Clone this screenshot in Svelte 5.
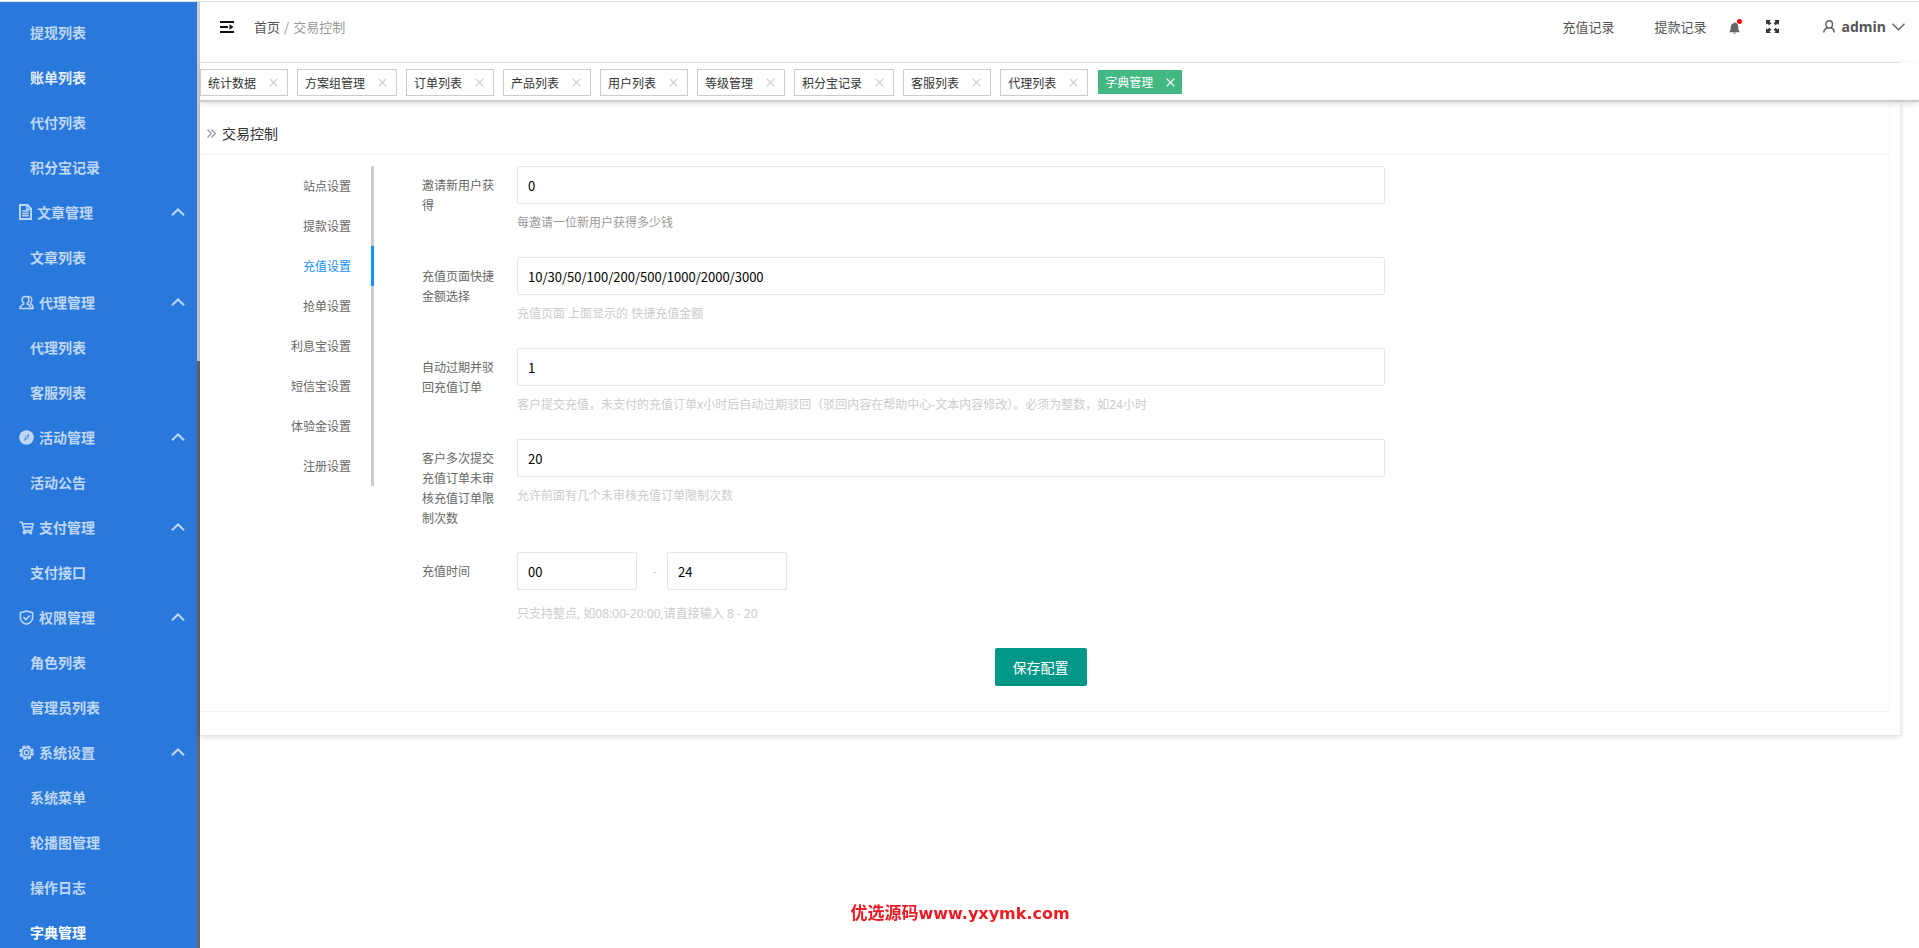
<script lang="ts">
    const menu = [
        { items: ['提现列表', '账单列表', '代付列表', '积分宝记录'] },
        { title: '文章管理', icon: 'file', items: ['文章列表'] },
        { title: '代理管理', icon: 'users', items: ['代理列表', '客服列表'] },
        { title: '活动管理', icon: 'compass', items: ['活动公告'] },
        { title: '支付管理', icon: 'cart', items: ['支付接口'] },
        { title: '权限管理', icon: 'shield', items: ['角色列表', '管理员列表'] },
        {
            title: '系统设置',
            icon: 'gear',
            items: ['系统菜单', '轮播图管理', '操作日志', '字典管理'],
        },
    ];

    const pageTabs = [
        '统计数据',
        '方案组管理',
        '订单列表',
        '产品列表',
        '用户列表',
        '等级管理',
        '积分宝记录',
        '客服列表',
        '代理列表',
        '字典管理',
    ];

    const sections = [
        '站点设置',
        '提款设置',
        '充值设置',
        '抢单设置',
        '利息宝设置',
        '短信宝设置',
        '体验金设置',
        '注册设置',
    ];

    let activePage = $state('字典管理');
    let activeSection = $state('充值设置');

    let fields = $state([
        {
            id: 'invite',
            label: '邀请新用户获得',
            value: '0',
            hint: '每邀请一位新用户获得多少钱',
            dark: true,
        },
        {
            id: 'amounts',
            label: '充值页面快捷金额选择',
            value: '10/30/50/100/200/500/1000/2000/3000',
            hint: '充值页面 上面显示的 快捷充值金额',
        },
        {
            id: 'expire',
            label: '自动过期并驳回充值订单',
            value: '1',
            hint: '客户提交充值，未支付的充值订单x小时后自动过期驳回（驳回内容在帮助中心-文本内容修改）。必须为整数，如24小时',
        },
        {
            id: 'limit',
            label: '客户多次提交充值订单未审核充值订单限制次数',
            value: '20',
            hint: '允许前面有几个未审核充值订单限制次数',
        },
    ]);
    let startHour = $state('00');
    let endHour = $state('24');
</script>

{#snippet menuIcon(name)}
    <svg
        class="menu-icon"
        class:narrow={name === 'file'}
        viewBox={name === 'file' ? '1 0 14 17' : '0 0 16 16'}
        aria-hidden="true"
    >
        {#if name === 'file'}
            <path d="M2 1h8l4 4v11H2z" fill="none" stroke="currentColor" stroke-width="2" />
            <path d="M9.5 1v4.5H14" fill="none" stroke="currentColor" stroke-width="1.5" />
            <path d="M4.5 7.500h7M4.5 10h7M4.5 12.500h7" stroke="currentColor" stroke-width="1.600" />
        {:else if name === 'users'}
            <path
                d="M7 1.500c2.200 0 3.600 1.500 3.600 3.600 0 1.600-.7 2.900-1.700 3.600v1c2.300.7 3.600 2.200 3.800 4.800H1c.2-2.600 1.700-4.100 4-4.800v-1c-1-.7-1.700-2-1.700-3.600C3.300 3 4.800 1.500 7 1.500z"
                fill="none"
                stroke="currentColor"
                stroke-width="1.600"
            />
            <path
                d="M9.500 1.500c2.600-.2 4.200 1.300 4.200 3.300 0 1.500-.6 2.500-1.400 3.200v1.300c1.700.8 2.700 2.200 2.900 5.200h-3"
                fill="none"
                stroke="currentColor"
                stroke-width="1.500"
            />
        {:else if name === 'compass'}
            <circle cx="8" cy="8" r="7.800" fill="currentColor" />
            <path d="M10.500 5 9.200 9 6 11l1.200-4z" fill="none" stroke="#2979dd" stroke-width=".8" />
        {:else if name === 'cart'}
            <path
                d="M.5 2.500h2.700l2.300 8.700h8l1.500-7.200H4M5 7.500h9.500M5.500 11.200l-.8 1.800h8.800"
                fill="none"
                stroke="currentColor"
                stroke-width="1.600"
            />
            <circle cx="5.800" cy="13.800" r="1.600" fill="currentColor" />
            <circle cx="12.500" cy="13.800" r="1.600" fill="currentColor" />
        {:else if name === 'shield'}
            <path
                d="M8 1 14.500 3v5.500c0 3.200-2.600 5.300-6.500 6.700C4.100 13.800 1.500 11.700 1.500 8.500V3z"
                fill="none"
                stroke="currentColor"
                stroke-width="1.700"
                stroke-linejoin="round"
            />
            <path d="m4.700 7.500 2.600 2.700 4.200-4.400" fill="none" stroke="currentColor" stroke-width="1.700" />
        {:else}
            <circle cx="8" cy="8" r="5.300" fill="none" stroke="currentColor" stroke-width="2" />
            <circle
                cx="8"
                cy="8"
                r="6.800"
                fill="none"
                stroke="currentColor"
                stroke-width="2.200"
                stroke-dasharray="3.300 2.040"
            />
            <circle cx="8" cy="8" r="2.400" fill="none" stroke="currentColor" stroke-width="1.500" />
        {/if}
    </svg>
{/snippet}

<div class="admin">
    <aside class="sidebar">
        <nav class="menu">
            {#each menu as group}
                {#if group.title}
                    <button class="menu-title" aria-expanded="true">
                        {@render menuIcon(group.icon)}
                        <span>{group.title}</span>
                        <svg class="menu-arrow" viewBox="0 0 14 8" aria-hidden="true">
                            <path d="M1 7.200 7 1.500l6 5.700" fill="none" stroke="currentColor" stroke-width="2" />
                        </svg>
                    </button>
                {/if}
                {#each group.items as item}
                    <a
                        href="#top"
                        class="menu-item"
                        class:current={item === '字典管理'}
                        class:hovered={item === '账单列表'}>{item}</a
                    >
                {/each}
            {/each}
        </nav>
        <div class="scroll-track"><div class="scroll-thumb"></div></div>
    </aside>

    <div class="main">
        <header class="header">
            <button class="icon-btn fold" aria-label="收起菜单">
                <svg width="14" height="12" viewBox="0 0 14 12">
                    <path d="M0 1h14M0 6h8M0 11h14" stroke="#111" stroke-width="2" />
                    <path d="M9.500 3.200 13.500 6l-4 2.800z" fill="#111" />
                </svg>
            </button>
            <div class="crumbs">
                <a href="#top">首页</a><span class="slash">/</span><span class="here">交易控制</span>
            </div>
            <div class="tools">
                <a href="#top" class="record">充值记录</a>
                <a href="#top" class="record">提款记录</a>
                <button class="icon-btn bell" aria-label="消息">
                    <svg width="14" height="16" viewBox="0 0 14 16">
                        <path
                            d="M5 4.200c-.2-1 1-1.400 1.400-.4C8.700 4.300 9.300 6 9.300 8.500c0 1.800.3 2.800 1.200 3.900v.9H.5v-.9C1.400 11.300 1.700 10.300 1.700 8.500 1.700 6 2.700 4.600 5 4.200zM4.200 13.800h2.700c-.2 1.300-2.500 1.300-2.700 0z"
                            fill="#666"
                        />
                        <circle cx="10.500" cy="2.500" r="2.500" fill="#f00" />
                    </svg>
                </button>
                <button class="icon-btn full" aria-label="全屏">
                    <svg width="13" height="13" viewBox="0 0 13 13" fill="#333">
                        <path
                            d="M0 0h4.800L3.400 1.400l1.900 1.900-2 2-1.900-1.900L0 4.800zM13 0v4.800l-1.400-1.400-1.900 1.900-2-2 1.900-1.900L8.200 0zM0 13V8.200l1.400 1.400 1.900-1.900 2 2-1.900 1.900L4.800 13zM13 13H8.200l1.400-1.400-1.900-1.900 2-2 1.900 1.900L13 8.200z"
                        />
                    </svg>
                </button>
                <button class="account">
                    <svg width="12" height="13" viewBox="0 0 12 13" aria-hidden="true">
                        <path
                            d="M.8 12.500c.1-2.700 1.600-4.100 3.600-4.800M8 7.700c2 .7 3.200 2.200 3.300 4.800M6.200 .8c2 0 3.300 1.500 3.300 3.500S8.200 8 6.200 8 2.900 6.300 2.900 4.300 4.200.8 6.200.8z"
                            fill="none"
                            stroke="#666"
                            stroke-width="1.500"
                        />
                    </svg>
                    <span>admin</span>
                    <svg width="13" height="8" viewBox="0 0 13 8" aria-hidden="true">
                        <path d="m.5.8 6 6 6-6" fill="none" stroke="#666" stroke-width="1.500" />
                    </svg>
                </button>
            </div>
        </header>

        <div class="tabs">
            {#each pageTabs as tab}
                <div class="tab" class:active={tab === activePage}>
                    <button class="tab-name" onclick={() => (activePage = tab)}>{tab}</button>
                    <button class="tab-close" aria-label="关闭{tab}">
                        <svg width="9" height="9" viewBox="0 0 9 9">
                            <path d="m.7.700 7.600 7.600m0-7.600L.7 8.300" stroke="currentColor" stroke-width="1.200" />
                        </svg>
                    </button>
                </div>
            {/each}
        </div>

        <main class="card">
            <div class="panel">
                <h1 class="card-title">
                    <svg width="9" height="9" viewBox="0 0 9 9" aria-hidden="true">
                        <path d="m.5.500 3.800 4-3.800 4m4-8 3.800 4-3.800 4" fill="none" stroke="#999" stroke-width="1.200" />
                    </svg>
                    交易控制
                </h1>
                <div class="card-body">
                    <nav class="sections">
                        {#each sections as section}
                            <button
                                class="section"
                                class:active={section === activeSection}
                                onclick={() => (activeSection = section)}>{section}</button
                            >
                        {/each}
                    </nav>

                    <form class="form" onsubmit={(e) => e.preventDefault()}>
                        {#each fields as field}
                            <div class="row">
                                <label for={field.id}>{field.label}</label>
                                <div class="control">
                                    <input id={field.id} type="text" bind:value={field.value} />
                                    <p class="hint" class:dark={field.dark}>{field.hint}</p>
                                </div>
                            </div>
                        {/each}
                        <div class="row">
                            <label for="start-hour">充值时间</label>
                            <div class="control">
                                <div class="range">
                                    <input id="start-hour" type="text" bind:value={startHour} />
                                    <span>-</span>
                                    <input type="text" aria-label="结束时间" bind:value={endHour} />
                                </div>
                                <p class="hint">只支持整点, 如08:00-20:00,请直接输入 8 - 20</p>
                            </div>
                        </div>
                        <button class="save" type="submit">保存配置</button>
                    </form>
                </div>
            </div>
        </main>
    </div>

    <div class="watermark"><span>优选源码</span>www.yxymk.com</div>
</div>

<style>
    :global(body) {
        margin: 0;
        background: #fff;
    }

    .admin {
        display: flex;
        box-sizing: border-box;
        height: 100vh;
        overflow: hidden;
        border-top: 1px solid #fff;
        font-family: "Noto Sans CJK SC", sans-serif;
        font-size: 12px;
        line-height: 20px;
        color: #333;
    }

    button {
        padding: 0;
        border: 0;
        background: none;
        font: inherit;
        color: inherit;
        cursor: pointer;
    }

    a {
        color: inherit;
        text-decoration: none;
    }

    svg {
        display: block;
        flex: none;
    }

    /* sidebar */
    .sidebar {
        display: flex;
        flex: none;
        width: 200px;
        border-top: 1px solid #e2e2e2;
        overflow: hidden;
    }

    .menu {
        flex: 1;
        padding-top: 8px;
        background: #2979dd;
        color: #bfd7f5;
        font-size: 14px;
        font-weight: 700;
    }

    .menu-item,
    .menu-title {
        display: flex;
        align-items: center;
        box-sizing: border-box;
        width: 100%;
        height: 45px;
        padding-bottom: 1px;
    }

    .menu-item {
        padding-left: 30px;
    }

    .menu-item.hovered {
        color: #e3eefb;
    }

    .menu-item.current {
        color: #fff;
    }

    .menu-title {
        gap: 5px;
        padding-right: 12px;
        padding-left: 19px;
    }

    .menu-icon {
        width: 15px;
        height: 15px;
    }

    .menu-icon.narrow {
        width: 13px;
        height: 16px;
    }

    .menu-arrow {
        width: 14px;
        height: 8px;
        margin-left: auto;
    }

    .scroll-track {
        width: 3px;
        background: #666;
    }

    .scroll-thumb {
        height: 38%;
        background: #ccc;
    }

    /* header */
    .main {
        display: flex;
        flex: 1;
        flex-direction: column;
        min-width: 0;
        border-top: 1px solid #e2e2e2;
    }

    .header {
        display: flex;
        align-items: center;
        height: 60px;
        margin-right: 19px;
        border-bottom: 1px solid #e2e2e2;
        color: #555;
        font-size: 13px;
    }

    .header > * {
        margin-bottom: 11px;
    }

    .fold {
        margin-left: 20px;
    }

    .crumbs {
        display: flex;
        gap: 4px;
        margin-left: 20px;
    }

    .slash,
    .here {
        color: #999;
    }

    .tools {
        display: flex;
        align-items: center;
        margin-right: -5px;
        margin-left: auto;
    }

    .record {
        margin-right: 40px;
    }

    .record + .bell {
        margin-left: -17px;
    }

    .full {
        margin-left: 23px;
    }

    .account {
        display: flex;
        align-items: center;
        gap: 6px;
        margin-left: 44px;
        font-family: "Open Sans", sans-serif;
        font-size: 14px;
        font-weight: 700;
    }

    /* opened pages */
    .tabs {
        position: relative;
        display: flex;
        gap: 9px;
        box-sizing: border-box;
        height: 39px;
        padding-top: 6px;
        border-bottom: 2px solid #ccc;
        background: #fff;
        box-shadow: 0 2px 6px rgba(0, 0, 0, 0.12);
    }

    .tab {
        display: flex;
        align-items: center;
        gap: 13px;
        box-sizing: border-box;
        height: 27px;
        padding: 0 9px 0 7px;
        border: 1px solid #ccc;
    }

    .tab-close {
        color: #ccc;
    }

    .tab.active {
        height: 26px;
        padding-right: 7px;
        border-color: #fff;
        background: #42b983;
        background-clip: padding-box;
        color: #fff;
    }

    .tab.active .tab-close {
        color: #fff;
    }

    /* settings card */
    .card {
        margin-right: 19px;
        padding-bottom: 23px;
        box-shadow: 0 1px 6px rgba(0, 0, 0, 0.2);
    }

    .panel {
        margin-right: 10px;
        border-right: 1px solid #f8f8f8;
        border-bottom: 1px solid #f2f2f2;
    }

    .card-title {
        display: flex;
        align-items: center;
        gap: 6px;
        height: 42px;
        margin: 0;
        padding: 10px 0 0 7px;
        border-bottom: 1px solid #f2f2f2;
        font-size: 14px;
        font-weight: 400;
    }

    .card-body {
        display: flex;
        align-items: flex-start;
        padding: 11px 0 25px;
    }

    .sections {
        display: flex;
        flex-direction: column;
        width: 174px;
    }

    .section {
        height: 40px;
        padding-right: 20px;
        border-right: 3px solid #ccc;
        color: #666;
        text-align: right;
    }

    .section.active {
        border-color: #1890ff;
        color: #1890ff;
    }

    .form {
        display: flex;
        flex: 1;
        flex-direction: column;
        margin: 0 215px 0 33px;
    }

    .row {
        display: flex;
        margin-bottom: 15px;
    }

    .row label {
        flex: none;
        width: 80px;
        padding: 9px 15px;
        color: #666;
    }

    .control {
        flex: 1;
    }

    .control input {
        display: block;
        box-sizing: border-box;
        width: 75%;
        height: 38px;
        padding: 0 10px;
        border: 1px solid #e6e6e6;
        border-radius: 2px;
        color: #000;
        font-family: inherit;
        font-size: 13px;
    }

    .range {
        display: flex;
        margin-bottom: 5px;
        color: #ccc;
        line-height: 38px;
    }

    .control .range input {
        width: 120px;
    }

    .range span {
        width: 14px;
        padding-left: 16px;
    }

    .hint {
        margin: 0;
        padding: 9px 0;
        color: #ccc;
        font-family: "Noto Sans", "Noto Sans CJK SC", sans-serif;
    }

    .hint.dark {
        color: #999;
    }

    .save {
        align-self: center;
        height: 38px;
        padding: 0 18px;
        border-radius: 2px;
        background: #009688;
        color: #fff;
        font-size: 14px;
    }

    .watermark {
        position: fixed;
        bottom: 24px;
        left: 50%;
        margin-left: -109px;
        color: #ed1c24;
        font-family: "DejaVu Sans", "Noto Sans CJK SC", sans-serif;
        font-size: 16px;
        font-weight: 700;
    }

    .watermark span {
        font-size: 17px;
    }
</style>
